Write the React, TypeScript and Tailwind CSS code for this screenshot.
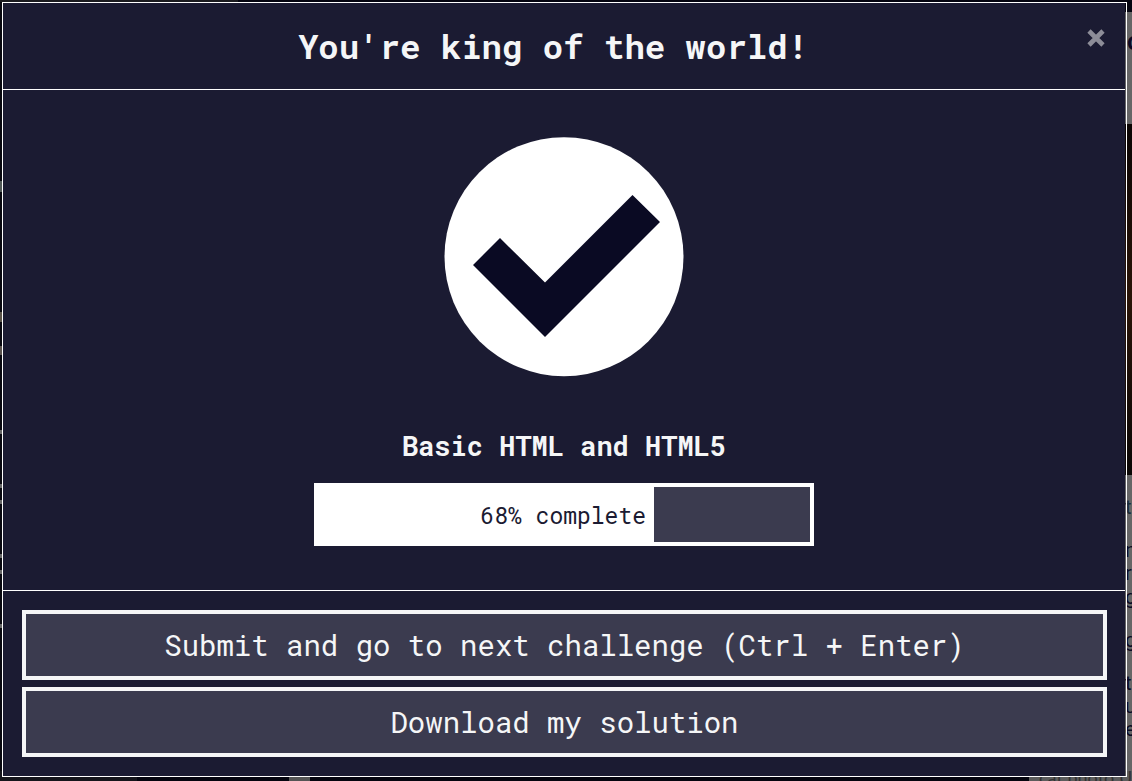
import React from "react";

const mono = "font-['Roboto_Mono','DejaVu_Sans_Mono',monospace]";

const previewLines = [
  { text: "ts", style: "h-[63px] pt-5 text-[#1a2c38]" },
  { text: "n", style: "h-[23px] text-[#0a0a23]" },
  { text: "r", style: "h-[24px] text-[#0a0a23]" },
  { text: "g", style: "h-[43px] text-[#0a0a23]" },
  { text: "g", style: "h-[43px] text-[#0a0a23]" },
  { text: "t", style: "h-[23px] text-[#0a0a23]" },
  { text: "uc", style: "h-[23px] text-[#0a0a23]" },
  { text: "en", style: "h-[23px] text-[#0a0a23]" },
];

function Backdrop() {
  return (
    <div className="absolute inset-0 flex flex-col overflow-hidden bg-[#04040f]" aria-hidden="true">
      <div className="flex min-h-0 flex-1">
        <div className="flex w-[238px] flex-col bg-[#08080f]">
          <div className="h-[2px] bg-[#1b1b1f]" />
          <div className="mt-[179px] h-[11px] w-[2px] bg-[#515957]" />
          <div className="mt-[120px] h-[10px] w-[2px] bg-[#5a5348]" />
          <div className="mt-[24px] h-[9px] w-[2px] bg-[#59524d]" />
          <div className="mt-[75px] h-[4px] w-[2px] bg-[#666]" />
          <div className="mt-[50px] h-[4px] w-[2px] bg-[#666]" />
          <div className="mt-[12px] h-[4px] w-[2px] bg-[#666]" />
          <div className="mt-[50px] h-[4px] w-[2px] bg-[#666]" />
          <div className="mt-[12px] h-[4px] w-[2px] bg-[#666]" />
          <div className="mt-[50px] h-[4px] w-[2px] bg-[#666]" />
        </div>
        <div className="flex-1" />
        <div className="flex w-[7px] flex-col overflow-hidden bg-[#666]">
          <div className="h-[12px] shrink-0 bg-[#04040f]" />
          <div className="h-[112px] shrink-0 overflow-hidden pt-[12px] pl-[2px] font-['Lato',sans-serif] text-[26px] leading-8 font-bold text-[#0a0a23]">
            c
          </div>
          <div className="h-[351px] shrink-0 bg-linear-to-b from-[#0b0604] via-[#2a1508] to-[#0b0806]" />
          {previewLines.map((line, i) => (
            <div
              key={i}
              className={`shrink-0 overflow-hidden font-['Roboto',sans-serif] text-[20px] leading-6 whitespace-nowrap ${line.style}`}
            >
              {line.text}
            </div>
          ))}
        </div>
      </div>
      <div className="flex h-[10px] overflow-hidden bg-[#05050f]">
        <div className="w-[137px] bg-[#15151b]" />
        <div className="ml-[152px] w-[21px] bg-[#555]" />
        <div className="flex-1" />
        <div className="w-[103px] bg-[#5c5c5c] pl-[10px] font-['Lato',sans-serif] text-[18px] leading-3 whitespace-nowrap text-[#333]">
          cat photo U
        </div>
      </div>
    </div>
  );
}

function CheckCircle() {
  return (
    <svg className="size-[240px]" viewBox="0 0 240 240" role="img" aria-label="Passed">
      <circle cx="120" cy="119.7" r="119.5" fill="#fff" />
      <path d="M29 128 56 101 101 145.5 188.5 58 216 85 101 200Z" fill="#0a0a23" />
    </svg>
  );
}

function ActionButton({ children }: { children: React.ReactNode }) {
  return (
    <button
      type="button"
      className="w-full border-4 border-[#f5f6f7] bg-[#3b3b4f] py-[11px] text-[29px] leading-10 text-[#f5f6f7]"
    >
      {children}
    </button>
  );
}

export default function App() {
  const percent = 68;
  return (
    <div className={`relative min-h-screen pt-[2px] pr-[5px] pb-1 pl-[2px] ${mono}`}>
      <Backdrop />
      <div
        role="dialog"
        aria-modal="true"
        aria-labelledby="dialog-title"
        className="relative border border-white pr-px text-[#f5f6f7]"
      >
        <div className="bg-[#1b1b32]">
          <header className="flex items-start border-b border-white pt-[21px] pr-[17px] pb-[21px] pl-[19px]">
            <h1 id="dialog-title" className="flex-1 text-center text-[34px] leading-11 font-bold">
              You're king of the world!
            </h1>
            <button type="button" aria-label="Close" className="flex h-7 w-6 items-center justify-center">
              <svg className="size-5" viewBox="0 0 20 20" aria-hidden="true">
                <path d="M3 3 17 17M17 3 3 17" stroke="#8d8d98" strokeWidth="4.6" />
              </svg>
            </button>
          </header>
          <main className="flex flex-col items-center border-b border-white pt-[47px] pb-11">
            <CheckCircle />
            <h2 className="mt-[49px] text-[27px] leading-10 font-bold">Basic HTML and HTML5</h2>
            <div
              role="progressbar"
              aria-valuenow={percent}
              aria-valuemin={0}
              aria-valuemax={100}
              aria-label="Basic HTML and HTML5"
              className="mt-[17px] flex h-[63px] w-[500px] max-w-full"
            >
              <div
                className="flex items-center justify-end bg-white pr-2 text-[23px] leading-8 whitespace-nowrap text-[#1b1b32]"
                style={{ width: `${percent}%` }}
              >
                {percent}% complete
              </div>
              <div className="flex-1 border-4 border-l-0 border-white bg-[#3b3b4f]" />
            </div>
          </main>
          <footer className="flex flex-col gap-[7px] pt-[19px] pr-[18px] pb-[19px] pl-[19px]">
            <ActionButton>Submit and go to next challenge (Ctrl + Enter)</ActionButton>
            <ActionButton>Download my solution</ActionButton>
          </footer>
        </div>
      </div>
    </div>
  );
}
